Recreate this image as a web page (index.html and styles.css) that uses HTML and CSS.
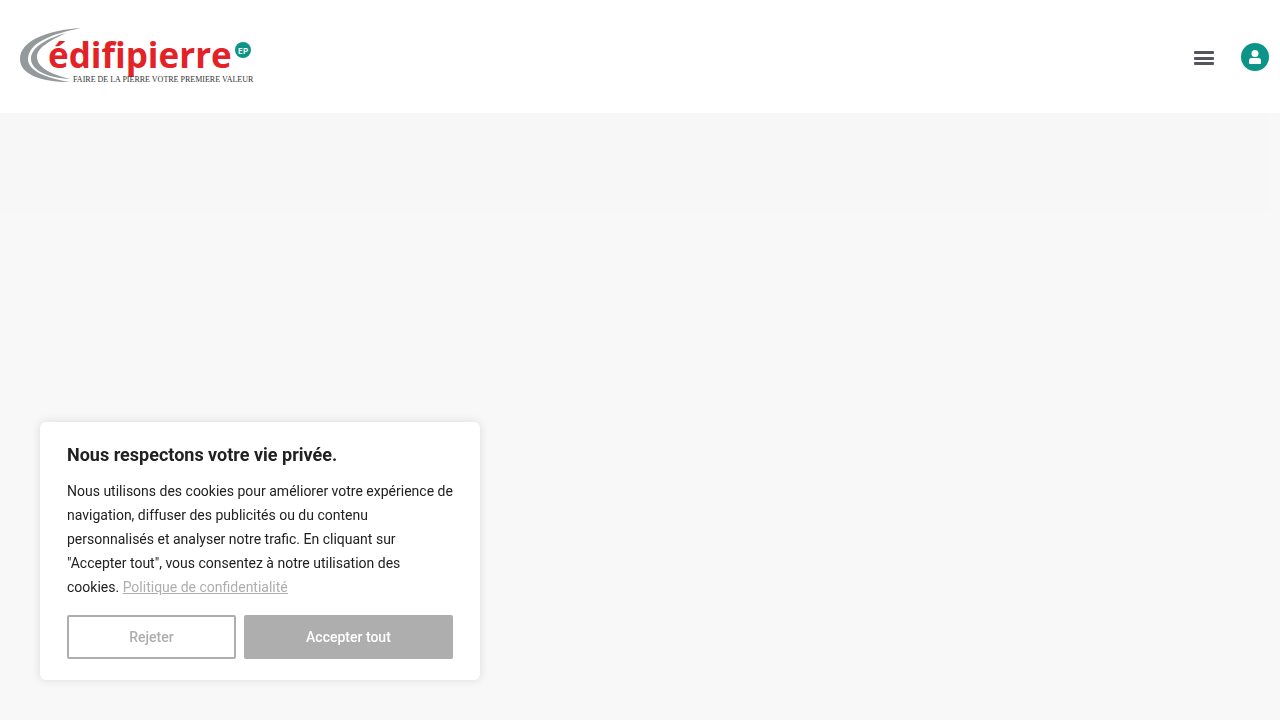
FILE: index.html
```html
<!DOCTYPE html>
<html lang="fr">
<head>
  <meta charset="UTF-8">
  <meta name="viewport" content="width=device-width, initial-scale=1.0">
  <title>Édifipierre</title>
  <link rel="stylesheet" href="styles.css">
</head>
<body>
  <header class="site-header">
    <a href="#" class="logo" aria-label="Édifipierre">
      <svg width="242" height="57" viewBox="0 0 242 57">
        <path class="swoosh" d="M61 0C27 2 0 13 0 31C0 46 20 54 50 54C24 50 8 42 8 31C8 24 13 17 23 12C34 6 47 3 61 0Z"/>
        <path class="swoosh" d="M46 5C22 12 11 21 11 31C11 42 28 50 50 51C30 46 17 39 17 29C17 20 29 13 46 5Z"/>
        <text class="logo-name" x="28" y="40">édifipierre</text>
        <circle class="logo-badge" cx="223" cy="22" r="8"/>
        <text class="logo-ep" x="223" y="26">EP</text>
        <text class="logo-tagline" x="53" y="54">FAIRE DE LA PIERRE VOTRE PREMIERE VALEUR</text>
      </svg>
    </a>
    <div class="header-actions">
      <button type="button" class="menu-toggle" aria-label="Menu">
        <svg width="20" height="16" viewBox="0 0 20 16">
          <rect y="2" width="20" height="3" rx="1"/>
          <rect y="8" width="20" height="3" rx="1"/>
          <rect y="13" width="20" height="3" rx="1"/>
        </svg>
      </button>
      <a href="#" class="account" aria-label="Mon compte">
        <svg width="12" height="14" viewBox="0 0 12 14">
          <circle cx="6" cy="3.5" r="3.5"/>
          <path d="M0 13V10.500Q0 8 2.500 8H9.500Q12 8 12 10.500V13Q12 14 11 14H1Q0 14 0 13Z"/>
        </svg>
      </a>
    </div>
  </header>

  <main>
    <section class="banner"></section>
  </main>

  <!-- Cookie consent -->
  <section class="cookie-box" aria-labelledby="cookie-title">
    <h2 id="cookie-title">Nous respectons votre vie privée.</h2>
    <p>Nous utilisons des cookies pour améliorer votre expérience de navigation, diffuser des publicités ou du contenu personnalisés et analyser notre trafic. En cliquant sur "Accepter tout", vous consentez à notre utilisation des cookies. <a href="#">Politique de confidentialité</a></p>
    <div class="cookie-buttons">
      <button type="button" class="btn btn-reject">Rejeter</button>
      <button type="button" class="btn btn-accept">Accepter tout</button>
    </div>
  </section>
</body>
</html>
```
FILE: styles.css
```css
:root {
  --page-bg: #f8f8f8;
  --banner-bg: #f7f7f7;
  --teal: #0d9488;
  --red: #e32227;
  --swoosh: #94999b;
  --consent: #aeaeae;
  --text-color: #212121;
}

* {
  margin: 0;
  padding: 0;
  box-sizing: border-box;
}

body {
  font-family: Roboto, "Liberation Sans", sans-serif;
  background: var(--page-bg);
  color: var(--text-color);
}

.site-header {
  display: flex;
  align-items: center;
  justify-content: space-between;
  padding: 28px 11px 28px 20px;
  background: #fff;
}

.logo svg,
.menu-toggle svg,
.account svg {
  display: block;
}

.swoosh {
  fill: var(--swoosh);
}

.logo-name {
  font: 700 35px "Open Sans", sans-serif;
  fill: var(--red);
}

.logo-badge {
  fill: var(--teal);
}

.logo-ep {
  font: 600 9px "Open Sans", sans-serif;
  fill: #fff;
  text-anchor: middle;
}

.logo-tagline {
  font: 8px "Liberation Serif", serif;
  fill: #333;
}

.header-actions {
  display: flex;
  align-items: center;
  gap: 27px;
}

.menu-toggle {
  border: 0;
  background: none;
  color: #54565c;
  cursor: pointer;
}

.menu-toggle svg,
.account svg {
  fill: currentColor;
}

.account {
  display: flex;
  align-items: center;
  justify-content: center;
  width: 28px;
  height: 28px;
  border-radius: 50%;
  background: var(--teal);
  color: #fff;
}

.banner {
  height: 98px;
  margin-right: 11px;
  background: var(--banner-bg);
}

.cookie-box {
  position: fixed;
  left: 40px;
  bottom: 40px;
  width: 440px;
  max-width: calc(100% - 80px);
  padding: 20px 27px 21px;
  border-radius: 6px;
  background: #fff;
  box-shadow: 0 0 10px rgba(0, 0, 0, 0.12);
}

.cookie-box h2 {
  margin-bottom: 12px;
  font-size: 18px;
  font-weight: 700;
  line-height: 25px;
}

.cookie-box p {
  margin-bottom: 16px;
  font-size: 14px;
  line-height: 24px;
}

.cookie-box a {
  color: var(--consent);
}

.cookie-buttons {
  display: flex;
  gap: 8px;
}

.btn {
  flex: 1 1 auto;
  padding: 8px 27px;
  border: 2px solid var(--consent);
  border-radius: 2px;
  font-family: inherit;
  font-size: 14px;
  font-weight: 500;
  line-height: 24px;
  cursor: pointer;
}

.btn-reject {
  background: transparent;
  color: var(--consent);
}

.btn-accept {
  background: var(--consent);
  color: #fff;
}
```
